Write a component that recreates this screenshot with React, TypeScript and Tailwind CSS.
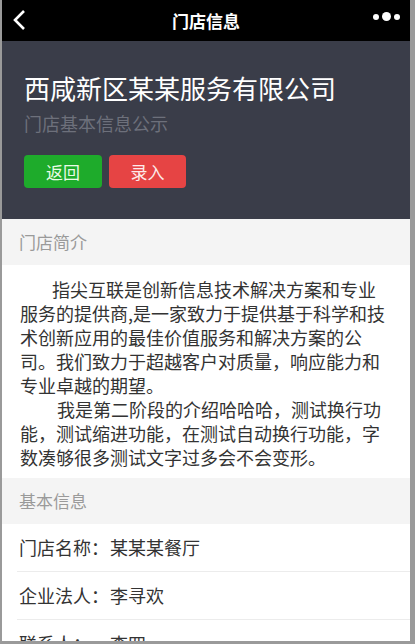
import React from "react";

const cjk = { fontFamily: '"Noto Sans CJK SC", "Noto Sans", sans-serif' };

function InfoRow({ label, value }: { label: string; value: string }) {
  return (
    <div className="pl-[15px]">
      <div className="flex h-[48px] items-center border-b border-[#ececec] pl-[2px] text-[18px] text-[#333]">
        <span className="w-[91px] shrink-0">{label}</span>
        <span>{value}</span>
      </div>
    </div>
  );
}

export default function App() {
  return (
    <div
      className="h-[644px] w-[415px] overflow-hidden border-b-[3px] border-l-2 border-r-[5px] border-[#9a9a9a] bg-white"
      style={cjk}
    >
      {/* Nav bar */}
      <div className="relative flex h-[41px] items-center justify-center bg-black">
        <svg
          className="absolute left-[10px] top-[9px]"
          width="16"
          height="22"
          viewBox="0 0 16 22"
          fill="none"
        >
          <path d="M12 2 L3 11 L12 20" stroke="white" strokeWidth="2.6" />
        </svg>
        <span className="text-[17px] font-bold text-white">门店信息</span>
        <div className="absolute right-[10px] top-[12px] flex items-center gap-[3px]">
          <span className="h-[6px] w-[6px] rounded-full bg-white" />
          <span className="h-[9px] w-[9px] rounded-full bg-white" />
          <span className="h-[6px] w-[6px] rounded-full bg-white" />
        </div>
      </div>

      {/* Header */}
      <div className="bg-[#3a3d49] px-[22px] pb-[31px] pt-[29px]">
        <h1 className="text-[26px] leading-[36px] text-white">西咸新区某某服务有限公司</h1>
        <p className="mt-[5px] text-[18px] leading-[24px] text-[#6d707b]">门店基本信息公示</p>
        <div className="mt-[20px] flex gap-[7px]">
          <button className="h-[33px] w-[78px] rounded-[4px] bg-[#1eab2b] text-[17px] text-[#eafbe6]">
            返回
          </button>
          <button className="h-[33px] w-[77px] rounded-[4px] bg-[#e64444] text-[17px] text-[#fdeaea]">
            录入
          </button>
        </div>
      </div>

      {/* Intro */}
      <div className="flex h-[46px] items-center bg-[#f4f4f4] px-[17px] text-[17px] text-[#9a9a9a]">
        门店简介
      </div>
      <div className="pb-[9px] pl-[18px] pr-[19px] pt-[12px] text-[18px] leading-[24px] text-[#333]">
        <p className="indent-[32px]">
          指尖互联是创新信息技术解决方案和专业服务的提供商,是一家致力于提供基于科学和技术创新应用的最佳价值服务和解决方案的公司。我们致力于超越客户对质量，响应能力和专业卓越的期望。
        </p>
        <p className="indent-[37px]">
          我是第二阶段的介绍哈哈哈，测试换行功能，测试缩进功能，在测试自动换行功能，字数凑够很多测试文字过多会不会变形。
        </p>
      </div>

      {/* Basic info */}
      <div className="flex h-[46px] items-center bg-[#f4f4f4] px-[17px] text-[17px] text-[#9a9a9a]">
        基本信息
      </div>
      <InfoRow label="门店名称：" value="某某某餐厅" />
      <InfoRow label="企业法人：" value="李寻欢" />
      <InfoRow label="联系人：" value="李四" />
    </div>
  );
}
